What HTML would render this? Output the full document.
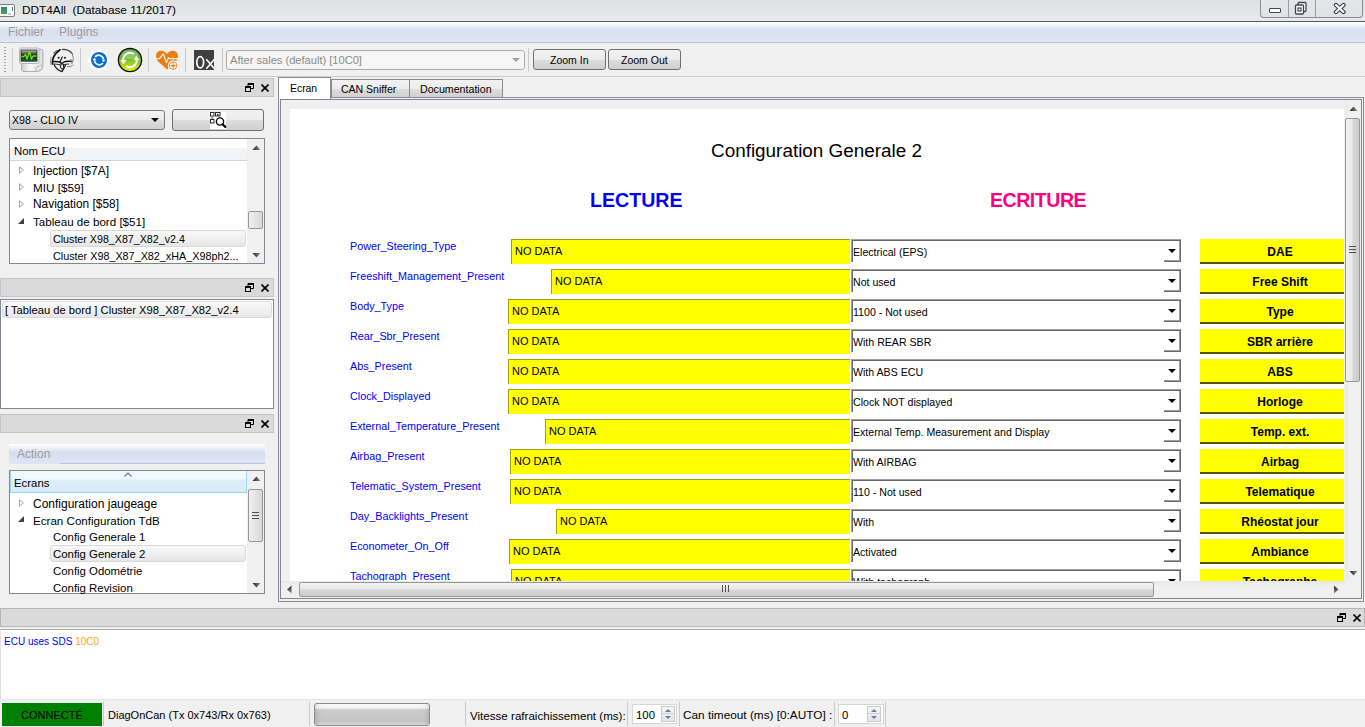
<!DOCTYPE html>
<html><head><meta charset="utf-8">
<style>
*{box-sizing:border-box;margin:0;padding:0}
html,body{width:1365px;height:727px;overflow:hidden;background:#f0f0f0;font-family:"Liberation Sans",sans-serif;font-size:11px;color:#000;position:relative}
.a{position:absolute}
.t{position:absolute;white-space:nowrap;line-height:1}
/* title bar */
#title{left:0;top:0;width:1365px;height:21px;background:linear-gradient(#dfe0e2,#e3e4e6 60%,#e9eaeb)}
#titleline{left:0;top:21px;width:1365px;height:1px;background:#5a5a5a}
#menubar{left:0;top:22px;width:1365px;height:21px;background:linear-gradient(#ffffff 0px,#eef1f8 4px,#d7dff0 8px,#dde4f3 18px,#e4e9f5 20px);border-bottom:1px solid #b9c3d9}
#winbtns{left:1260px;top:-1px;width:103px;height:19px;border:1px solid #8a8c90;border-top:none;border-radius:0 0 4px 4px;background:linear-gradient(#e4e6e9,#e0e2e5)}
.dock-title{position:absolute;left:0;width:274px;height:19px;background:#dadada;border:1px solid #c5c5c5}
.flt{position:absolute;width:9px;height:9px}
.btn{position:absolute;border:1px solid #707070;border-radius:3px;background:linear-gradient(#f2f2f2 0%,#ebebeb 50%,#dddddd 51%,#cfcfcf 100%)}
.tab{position:absolute;top:79px;height:19px;border:1px solid #898c95;border-bottom:none;background:linear-gradient(#f2f2f2,#ebebeb 50%,#dddddd 51%,#cfcfcf)}
.lbl{position:absolute;left:350px;color:#0000ff;font-size:10.8px;white-space:nowrap;line-height:1}
.nd{position:absolute;height:25px;background:#ffff00;border-left:1px solid #a3a300;border-top:1px solid #a3a300}
.nd span{position:absolute;left:3px;top:6px;font-size:11px;line-height:1;color:#000}
.cb{position:absolute;left:851px;width:330px;height:23px;background:#fff;border-left:1px solid #a0a0a0;border-top:1px solid #a0a0a0;box-shadow:inset 1px 1px 0 #696969}
.cb span{position:absolute;left:1px;top:7px;font-size:10.6px;line-height:1;color:#000;white-space:nowrap}
.cb i{position:absolute;right:0;top:1px;width:17px;height:21px;border-right:1px solid #696969;border-bottom:1px solid #696969;box-shadow:inset -1px -1px 0 #a0a0a0}
.cb i:before{content:"";position:absolute;left:4px;top:8px;border-left:4px solid transparent;border-right:4px solid transparent;border-top:4px solid #000}
.yb{position:absolute;left:1200px;width:160px;height:25px;background:#ffff00;border-bottom:2px solid #555500}
.yb span{position:absolute;left:0;right:0;top:7px;text-align:center;font-weight:bold;font-size:12px;line-height:1;color:#000}
.tr{position:absolute;font-size:11px;line-height:1;white-space:nowrap;color:#000}
.tri{position:absolute;width:0;height:0;border-top:4px solid transparent;border-bottom:4px solid transparent;border-left:5px solid #a6a6a6}
.tri:after{content:"";position:absolute;left:-4px;top:-2.5px;border-top:2.5px solid transparent;border-bottom:2.5px solid transparent;border-left:3px solid #fff}
.sep{position:absolute;width:1px;background:#cacaca}
</style></head><body>
<svg width="0" height="0" style="position:absolute"><defs><linearGradient id="ar1" x1="0" y1="0" x2="1" y2="0"><stop offset="0" stop-color="#202020"/><stop offset="1" stop-color="#909090"/></linearGradient><linearGradient id="ar2" x1="0" y1="0" x2="0" y2="1"><stop offset="0" stop-color="#202020"/><stop offset="1" stop-color="#909090"/></linearGradient></defs></svg>

<!-- Title bar -->
<div class="a" id="title"></div>
<div class="a" style="left:-3px;top:4px;width:18px;height:13px;border:1px solid #7a7e84;border-radius:2px;background:#fdfdfd"></div>
<div class="a" style="left:1px;top:7px;width:6px;height:7px;background:linear-gradient(#3a70b0,#3a9a5a 40%,#40a050)"></div>
<div class="a" style="left:8px;top:13px;width:3px;height:2px;background:#c8c8c8"></div>
<div class="a" style="left:12px;top:7px;width:1px;height:4px;background:linear-gradient(#3060c0,#40a040)"></div>
<div class="t" style="left:22px;top:5px;font-size:11.8px;color:#000">DDT4All&nbsp; (Database 11/2017)</div>
<div class="a" id="winbtns"></div>
<div class="a" style="left:1288px;top:0;width:1px;height:17px;background:#9a9ca0"></div>
<div class="a" style="left:1315px;top:0;width:1px;height:17px;background:#9a9ca0"></div>
<div class="a" style="left:1269px;top:8px;width:12px;height:5px;border:1.5px solid #3c4656;background:#fff;border-radius:1px"></div>
<svg class="a" style="left:1294px;top:1px" width="14" height="14" viewBox="0 0 14 14"><rect x="4" y="1.5" width="8" height="9" rx="1" fill="#fff" stroke="#3c4656" stroke-width="1.3"/><rect x="1.5" y="4" width="8" height="9" rx="1" fill="#fff" stroke="#3c4656" stroke-width="1.3"/><rect x="4" y="7" width="3" height="3" fill="none" stroke="#3c4656" stroke-width="1.2"/></svg>
<svg class="a" style="left:1333px;top:2px" width="14" height="13" viewBox="0 0 14 13"><path d="M3 3 L10.5 10 M10.5 3 L3 10" stroke="#3c4656" stroke-width="4.4" stroke-linecap="round"/><path d="M3 3 L10.5 10 M10.5 3 L3 10" stroke="#fff" stroke-width="2" stroke-linecap="round"/></svg>
<div class="a" id="titleline"></div>

<!-- Menu bar -->
<div class="a" id="menubar"></div>
<div class="t" style="left:8px;top:26px;font-size:12px;color:#a39a9a">Fichier</div>
<div class="t" style="left:59px;top:26px;font-size:12px;color:#a39a9a">Plugins</div>

<!-- Toolbar -->
<div class="a" style="left:0;top:76px;width:1365px;height:1px;background:#cbcbcb"></div>
<div class="a" style="left:4px;top:47px;width:2px;height:26px;background:repeating-linear-gradient(#a0a0a0 0 1px,transparent 1px 3px)"></div>
<div class="sep" style="left:12px;top:48px;height:24px"></div>
<div class="sep" style="left:80px;top:48px;height:24px"></div>
<div class="sep" style="left:148px;top:48px;height:24px"></div>
<div class="sep" style="left:185px;top:48px;height:24px"></div>
<div class="sep" style="left:222px;top:48px;height:24px"></div>
<div class="sep" style="left:528px;top:48px;height:24px"></div>


<!-- toolbar icons -->
<svg class="a" style="left:19px;top:47px" width="25" height="26" viewBox="0 0 25 26">
<defs><linearGradient id="pg" x1="0" y1="0" x2="1" y2="0"><stop offset="0" stop-color="#cfcfcf"/><stop offset="0.4" stop-color="#f7f7f7"/><stop offset="1" stop-color="#dcdcdc"/></linearGradient>
<linearGradient id="scr" x1="0" y1="0" x2="0" y2="1"><stop offset="0" stop-color="#c0c6c4"/><stop offset="0.45" stop-color="#0e2a1c"/><stop offset="1" stop-color="#0a6a3a"/></linearGradient></defs>
<path d="M3 2 H21 Q24 2 24 5 V18 Q24 24.5 17 24.5 H5 Q2.5 24.5 2.5 22 Z" fill="url(#pg)" stroke="#a8aeb4" stroke-width="1"/>
<path d="M17 24.5 Q15.5 20 19 19.5 Q22 19 24 18" fill="#e8e8e8" stroke="#a8aeb4" stroke-width="0.8"/>
<rect x="0.5" y="1" width="19.5" height="15.5" rx="1.5" fill="#f4f4f4" stroke="#b4b4b4" stroke-width="1"/>
<rect x="2" y="3" width="16" height="11.2" fill="url(#scr)" stroke="#2a2a2a" stroke-width="0.8"/>
<polyline points="2.4,9.5 5,9.5 6.5,7 8,12 10.5,4.5 12.5,12 14,9 17.6,9" fill="none" stroke="#7fe000" stroke-width="1.3" stroke-linejoin="round"/>
</svg>
<svg class="a" style="left:50px;top:48px" width="25" height="25" viewBox="0 0 25 25" fill="none" stroke-linecap="round" stroke-linejoin="round">
<path d="M2.5 16 Q1.5 8 10 1.8" stroke="#111" stroke-width="1.7"/>
<path d="M4 5 Q6 3 8 2.5" stroke="#555" stroke-width="1.2" stroke-dasharray="1.5 1"/>
<path d="M12.5 1.5 Q19 1 22.5 6" stroke="#444" stroke-width="1.3" stroke-dasharray="2 0.8"/>
<path d="M22.5 7.5 Q24 11 22.5 14" stroke="#777" stroke-width="1" stroke-dasharray="1.5 1"/>
<path d="M1 9 Q0 13 1 17" stroke="#888" stroke-width="0.9" stroke-dasharray="1.2 1"/>
<circle cx="8.6" cy="9.7" r="1" fill="#111" stroke="none"/><circle cx="15" cy="9.7" r="1" fill="#111" stroke="none"/>
<path d="M12.3 9 Q11 11.5 10 14" stroke="#111" stroke-width="1.2"/>
<path d="M3.5 13.6 Q8 13.2 10 14.2 Q12 16.5 14 13.8 Q17 13 21 13.4" stroke="#111" stroke-width="1.3"/>
<path d="M4 16.5 Q6.5 22 12 23.6 Q14.5 20 15.5 17" stroke="#111" stroke-width="1.2"/>
<path d="M10 16.8 Q10.5 21.5 12.3 21.3 Q13.8 20.5 13.6 16.8" stroke="#111" stroke-width="1"/>
<path d="M4.5 16 Q10 17.8 19 16" stroke="#222" stroke-width="0.9"/>
<path d="M17.5 18.5 Q20.5 19 23 17" stroke="#666" stroke-width="0.9" stroke-dasharray="1.5 0.8"/>
<path d="M21 11.5 Q23 13 22 15.5" stroke="#555" stroke-width="0.9"/>
</svg>
<svg class="a" style="left:87px;top:48px" width="24" height="24" viewBox="0 0 24 24">
<g fill="#fff"><circle cx="12" cy="12" r="9.5"/><rect x="10" y="0.8" width="4" height="4" rx="1"/><rect x="10" y="19.2" width="4" height="4" rx="1"/><rect x="0.8" y="10" width="4" height="4" rx="1"/><rect x="19.2" y="10" width="4" height="4" rx="1"/><g transform="rotate(45 12 12)"><rect x="10" y="0.8" width="4" height="4" rx="1"/><rect x="10" y="19.2" width="4" height="4" rx="1"/><rect x="0.8" y="10" width="4" height="4" rx="1"/><rect x="19.2" y="10" width="4" height="4" rx="1"/></g></g>
<circle cx="12" cy="12" r="8" fill="#0b6fd2"/>
<path d="M7.5 12.5 A4.8 4.8 0 0 0 16 15" fill="none" stroke="#fff" stroke-width="1.6"/>
<path d="M16.5 11.5 A4.8 4.8 0 0 0 8 9" fill="none" stroke="#fff" stroke-width="1.6"/>
<path d="M5.6 12.3 L9.4 12.3 L7.5 9.8Z" fill="#fff"/><path d="M14.6 11.7 L18.4 11.7 L16.5 14.2Z" fill="#fff"/>
</svg>
<svg class="a" style="left:117px;top:47px" width="26" height="26" viewBox="0 0 26 26">
<defs><linearGradient id="gg" x1="0" y1="0" x2="0" y2="1"><stop offset="0" stop-color="#3c9a3a"/><stop offset="0.5" stop-color="#7cc22c"/><stop offset="1" stop-color="#e8f000"/></linearGradient></defs>
<circle cx="13" cy="13" r="11.6" fill="url(#gg)" stroke="#0a0a0a" stroke-width="1.3"/>
<ellipse cx="13" cy="7.5" rx="8" ry="4.5" fill="#fff" opacity="0.25"/>
<path d="M6.5 14 A6.8 6.8 0 0 1 17 7" fill="none" stroke="#fff" stroke-width="2"/>
<path d="M19.5 12 A6.8 6.8 0 0 1 9 19" fill="none" stroke="#fff" stroke-width="2"/>
<path d="M3.5 13 L9.5 13 L6.5 17.5Z" fill="#fff"/><path d="M16.5 13 L22.5 13 L19.5 8.5Z" fill="#fff"/>
</svg>
<svg class="a" style="left:155px;top:49px" width="24" height="22" viewBox="0 0 24 22">
<path d="M12 5 C10 0.5 1 0 1 7 C1 10.5 3 12.5 6 15 L12 20.5 L18 15 C21 12.5 23 10.5 23 7 C23 0 14 0.5 12 5Z" fill="#f07c12"/>
<polyline points="0.5,9.8 4.5,9.6 8.3,4.8 11.5,13.6 13.5,8.5 14.6,9.6 23.5,9.6" fill="none" stroke="#fff" stroke-width="1.1" stroke-linejoin="round"/>
<circle cx="18.2" cy="16.6" r="5.3" fill="#fff"/>
<circle cx="18.2" cy="16.6" r="4.2" fill="#f07c12"/>
<circle cx="18.2" cy="16.6" r="3.2" fill="#fff"/>
<circle cx="18.2" cy="16.6" r="2.5" fill="#f07c12" opacity="0"/>
<path d="M18.2 14.2V19M15.8 16.6H20.6" stroke="#f07c12" stroke-width="1.2"/>
</svg>
<svg class="a" style="left:194px;top:50px" width="20" height="20" viewBox="0 0 20 20"><rect width="20" height="20" fill="#404040"/><ellipse cx="6.2" cy="12.3" rx="3.4" ry="5.6" fill="none" stroke="#fff" stroke-width="1.7"/><path d="M12.3 9.2L20.5 18.8M20.5 9.2L12.3 18.8" stroke="#fff" stroke-width="1.6"/></svg>

<!-- Combo after sales -->
<div class="a" style="left:226px;top:50px;width:299px;height:20px;border:1px solid #acacac;border-radius:3px;background:#f6f6f6"></div>
<div class="t" style="left:230px;top:55px;font-size:11.1px;color:#8a8a8a">After sales (default) [10C0]</div>
<div class="a" style="left:512px;top:58px;border-left:4px solid transparent;border-right:4px solid transparent;border-top:4px solid #a0a0a0"></div>
<div class="btn" style="left:533px;top:49px;width:73px;height:21px"></div>
<div class="t" style="left:550px;top:55px;font-size:10.5px">Zoom In</div>
<div class="btn" style="left:608px;top:49px;width:73px;height:21px"></div>
<div class="t" style="left:621px;top:55px;font-size:10.5px">Zoom Out</div>

<!-- LEFT DOCK 1 -->
<div class="dock-title" style="top:78px"></div>
<svg class="a" style="left:245px;top:83px" width="9" height="9" viewBox="0 0 9 9"><path d="M3 0.5H8.5V5.5H6M3 0.5V3" fill="none" stroke="#000" stroke-width="1"/><rect x="3" y="0" width="6" height="2" fill="#000"/><rect x="0.5" y="3.5" width="5" height="5" fill="none" stroke="#000" stroke-width="1"/><rect x="0" y="3" width="6" height="2" fill="#000"/></svg>
<svg class="a" style="left:261px;top:84px" width="8" height="8" viewBox="0 0 8 8"><path d="M0.5 0.5L7.5 7.5M7.5 0.5L0.5 7.5" stroke="#000" stroke-width="1.6"/></svg>

<div class="btn" style="left:9px;top:110px;width:156px;height:20px;border-color:#7a7a7a"></div>
<div class="t" style="left:12px;top:115px;font-size:10.6px">X98 - CLIO IV</div>
<div class="a" style="left:151px;top:118px;border-left:4px solid transparent;border-right:4px solid transparent;border-top:4px solid #000"></div>
<div class="btn" style="left:172px;top:109px;width:92px;height:22px"></div>
<svg class="a" style="left:209px;top:111px" width="18" height="18" viewBox="0 0 18 18"><rect x="1" y="1" width="16" height="17" fill="#fff"/><g fill="none" stroke="#2a2a2a" stroke-width="1"><rect x="1.5" y="1.5" width="3.5" height="3.5"/><rect x="6.5" y="1.5" width="4.5" height="3.5"/><rect x="1.5" y="8.5" width="3.5" height="3.5"/></g><rect x="8" y="3" width="1.5" height="1.5" fill="#111"/><rect x="2" y="6.5" width="2.5" height="1" fill="#444"/><circle cx="11" cy="10.5" r="3.6" fill="#fff" stroke="#000" stroke-width="1.4"/><path d="M13.6 13.2L16.3 15.9" stroke="#000" stroke-width="2.2" stroke-linecap="round"/></svg>

<!-- Tree ECU -->
<div class="a" style="left:9px;top:138px;width:256px;height:126px;border:1px solid #828790;background:#fff"></div>
<div class="a" style="left:10px;top:139px;width:237px;height:22px;background:linear-gradient(#fff 0,#fff 9px,#f2f3f5 9px);border-bottom:1px solid #d5d5d5"></div>
<div class="tr" style="font-size:11.4px;left:14px;top:146px">Nom ECU</div>
<div class="a" style="left:247px;top:139px;width:17px;height:124px;background:#f0f0f0"></div>
<svg class="a" style="left:252px;top:145px" width="9" height="5" viewBox="0 0 9 5"><path d="M0.5 5L4.5 0.5L8.5 5Z" fill="url(#ar1)"/></svg>
<svg class="a" style="left:252px;top:253px" width="9" height="5" viewBox="0 0 9 5"><path d="M0.5 0L4.5 4.5L8.5 0Z" fill="url(#ar1)"/></svg>
<div class="a" style="left:248px;top:211px;width:15px;height:18px;border:1px solid #979797;border-radius:2px;background:linear-gradient(90deg,#f0f0f0,#d8d8d8)"></div>
<div class="tri" style="left:19px;top:166px"></div>
<div class="tri" style="left:19px;top:183px"></div>
<div class="tri" style="left:19px;top:200px"></div>
<div class="a" style="left:18px;top:218px;width:0;height:0;border-bottom:6px solid #404040;border-left:6px solid transparent"></div>
<div class="tr" style="font-size:12px;left:33px;top:165px">Injection [$7A]</div>
<div class="tr" style="font-size:11.7px;left:33px;top:182px">MIU [$59]</div>
<div class="tr" style="font-size:11.9px;left:33px;top:199px">Navigation [$58]</div>
<div class="tr" style="font-size:11.6px;left:33px;top:216px">Tableau de bord [$51]</div>
<div class="a" style="left:50px;top:230px;width:196px;height:17px;border:1px solid #d9d9d9;border-radius:3px;background:linear-gradient(#fafafa,#e6e6e6)"></div>
<div class="tr" style="font-size:10.7px;left:53px;top:234px">Cluster X98_X87_X82_v2.4</div>
<div class="tr" style="font-size:10.8px;left:53px;top:251px">Cluster X98_X87_X82_xHA_X98ph2...</div>
<div class="a" style="left:10px;top:263px;width:254px;height:0"></div>

<!-- LEFT DOCK 2 -->
<div class="dock-title" style="top:278px"></div>
<svg class="a" style="left:245px;top:283px" width="9" height="9" viewBox="0 0 9 9"><path d="M3 0.5H8.5V5.5H6M3 0.5V3" fill="none" stroke="#000" stroke-width="1"/><rect x="3" y="0" width="6" height="2" fill="#000"/><rect x="0.5" y="3.5" width="5" height="5" fill="none" stroke="#000" stroke-width="1"/><rect x="0" y="3" width="6" height="2" fill="#000"/></svg>
<svg class="a" style="left:261px;top:284px" width="8" height="8" viewBox="0 0 8 8"><path d="M0.5 0.5L7.5 7.5M7.5 0.5L0.5 7.5" stroke="#000" stroke-width="1.6"/></svg>
<div class="a" style="left:0;top:299px;width:274px;height:110px;border:1px solid #828790;background:#fff"></div>
<div class="a" style="left:2px;top:301px;width:270px;height:17px;border:1px solid #dadada;border-radius:3px;background:linear-gradient(#fafafa,#e8e8e8)"></div>
<div class="tr" style="font-size:11.2px;left:5px;top:305px">[ Tableau de bord ] Cluster X98_X87_X82_v2.4</div>

<!-- LEFT DOCK 3 -->
<div class="dock-title" style="top:414px"></div>
<svg class="a" style="left:245px;top:419px" width="9" height="9" viewBox="0 0 9 9"><path d="M3 0.5H8.5V5.5H6M3 0.5V3" fill="none" stroke="#000" stroke-width="1"/><rect x="3" y="0" width="6" height="2" fill="#000"/><rect x="0.5" y="3.5" width="5" height="5" fill="none" stroke="#000" stroke-width="1"/><rect x="0" y="3" width="6" height="2" fill="#000"/></svg>
<svg class="a" style="left:261px;top:420px" width="8" height="8" viewBox="0 0 8 8"><path d="M0.5 0.5L7.5 7.5M7.5 0.5L0.5 7.5" stroke="#000" stroke-width="1.6"/></svg>
<div class="a" style="left:9px;top:444px;width:256px;height:20px;background:linear-gradient(#ffffff 0,#eef1f8 4px,#d7dff0 8px,#dde4f3 18px)"></div>
<div class="a" style="left:60px;top:463px;width:205px;height:1px;background:#b9c3d9"></div>
<div class="t" style="left:17px;top:448px;font-size:12px;color:#a39a9a">Action</div>
<div class="a" style="left:9px;top:470px;width:256px;height:124px;border:1px solid #828790;background:#fff"></div>
<div class="a" style="left:10px;top:471px;width:237px;height:22px;background:linear-gradient(#f2f9fd 0,#f2f9fd 8px,#ddeef8 9px,#d8ebf7);border:1px solid #96d9f9;border-top:none"></div>
<svg class="a" style="left:124px;top:472px" width="8" height="5" viewBox="0 0 8 5"><path d="M0.5 4.5L4 1L7.5 4.5" fill="none" stroke="#5a7a98" stroke-width="1.2"/></svg>
<div class="tr" style="font-size:11.4px;left:14px;top:478px">Ecrans</div>
<div class="a" style="left:247px;top:471px;width:17px;height:122px;background:#f0f0f0"></div>
<svg class="a" style="left:252px;top:476px" width="9" height="5" viewBox="0 0 9 5"><path d="M0.5 5L4.5 0.5L8.5 5Z" fill="url(#ar1)"/></svg>
<svg class="a" style="left:252px;top:583px" width="9" height="5" viewBox="0 0 9 5"><path d="M0.5 0L4.5 4.5L8.5 0Z" fill="url(#ar1)"/></svg>
<div class="a" style="left:248px;top:489px;width:15px;height:53px;border:1px solid #979797;border-radius:2px;background:linear-gradient(90deg,#f0f0f0,#d8d8d8)"></div>
<div class="a" style="left:252px;top:512px;width:7px;height:7px;background:repeating-linear-gradient(#505050 0 1px,transparent 1px 3px)"></div>
<div class="tri" style="left:19px;top:499px"></div>
<div class="a" style="left:18px;top:516px;width:0;height:0;border-bottom:6px solid #404040;border-left:6px solid transparent"></div>
<div class="tr" style="font-size:12px;left:33px;top:498px">Configuration jaugeage</div>
<div class="tr" style="font-size:11.6px;left:33px;top:515px">Ecran Configuration TdB</div>
<div class="tr" style="font-size:11.4px;left:53px;top:532px">Config Generale 1</div>
<div class="a" style="left:50px;top:545px;width:196px;height:17px;border:1px solid #d9d9d9;border-radius:3px;background:linear-gradient(#fafafa,#e6e6e6)"></div>
<div class="tr" style="font-size:11.4px;left:53px;top:549px">Config Generale 2</div>
<div class="tr" style="font-size:11.4px;left:53px;top:566px">Config Odométrie</div>
<div class="tr" style="font-size:11.4px;left:53px;top:583px">Config Revision</div>

<!-- TABS -->
<div class="tab" style="left:331px;width:79px"></div>
<div class="t" style="left:341px;top:84px;font-size:10.5px">CAN Sniffer</div>
<div class="tab" style="left:409px;width:94px"></div>
<div class="t" style="left:420px;top:84px;font-size:10.65px">Documentation</div>
<div class="a" style="left:278px;top:97px;width:1086px;height:505px;border:1px solid #898c95;background:#f0f0f0"></div>
<div class="a" style="left:278px;top:77px;width:53px;height:22px;border:1px solid #898c95;border-bottom:none;background:#fff"></div>
<div class="t" style="left:290px;top:84px;font-size:10.4px">Ecran</div>
<div class="a" style="left:280px;top:99px;width:1082px;height:500px;border:1px solid #828790;background:#f0f0f0"></div>

<!-- content -->
<div class="a" style="left:290px;top:108px;width:1054px;height:473px;background:#fff;overflow:hidden" id="content">
<!--C-->
<div class="t" style="left:421px;top:34px;font-size:18.9px">Configuration Generale 2</div>
<div class="t" style="left:300px;top:83px;font-size:19.6px;font-weight:bold;color:#0000ff">LECTURE</div>
<div class="t" style="left:700px;top:83px;font-size:19.6px;font-weight:bold;color:#ff0080;letter-spacing:-0.5px">ECRITURE</div>
<div class="lbl" style="left:60px;top:133px">Power_Steering_Type</div>
<div class="nd" style="left:221px;top:131px;width:339px"><span>NO DATA</span></div>
<div class="cb" style="left:561px;top:131px"><span>Electrical (EPS)</span><i></i></div>
<div class="yb" style="left:910px;top:131px"><span>DAE</span></div>
<div class="lbl" style="left:60px;top:163px">Freeshift_Management_Present</div>
<div class="nd" style="left:261px;top:161px;width:299px"><span>NO DATA</span></div>
<div class="cb" style="left:561px;top:161px"><span>Not used</span><i></i></div>
<div class="yb" style="left:910px;top:161px"><span>Free Shift</span></div>
<div class="lbl" style="left:60px;top:193px">Body_Type</div>
<div class="nd" style="left:218px;top:191px;width:342px"><span>NO DATA</span></div>
<div class="cb" style="left:561px;top:191px"><span>1100 - Not used</span><i></i></div>
<div class="yb" style="left:910px;top:191px"><span>Type</span></div>
<div class="lbl" style="left:60px;top:223px">Rear_Sbr_Present</div>
<div class="nd" style="left:218px;top:221px;width:342px"><span>NO DATA</span></div>
<div class="cb" style="left:561px;top:221px"><span>With REAR SBR</span><i></i></div>
<div class="yb" style="left:910px;top:221px"><span>SBR arrière</span></div>
<div class="lbl" style="left:60px;top:253px">Abs_Present</div>
<div class="nd" style="left:218px;top:251px;width:342px"><span>NO DATA</span></div>
<div class="cb" style="left:561px;top:251px"><span>With ABS ECU</span><i></i></div>
<div class="yb" style="left:910px;top:251px"><span>ABS</span></div>
<div class="lbl" style="left:60px;top:283px">Clock_Displayed</div>
<div class="nd" style="left:218px;top:281px;width:342px"><span>NO DATA</span></div>
<div class="cb" style="left:561px;top:281px"><span>Clock NOT displayed</span><i></i></div>
<div class="yb" style="left:910px;top:281px"><span>Horloge</span></div>
<div class="lbl" style="left:60px;top:313px">External_Temperature_Present</div>
<div class="nd" style="left:255px;top:311px;width:305px"><span>NO DATA</span></div>
<div class="cb" style="left:561px;top:311px"><span>External Temp. Measurement and Display</span><i></i></div>
<div class="yb" style="left:910px;top:311px"><span>Temp. ext.</span></div>
<div class="lbl" style="left:60px;top:343px">Airbag_Present</div>
<div class="nd" style="left:220px;top:341px;width:340px"><span>NO DATA</span></div>
<div class="cb" style="left:561px;top:341px"><span>With AIRBAG</span><i></i></div>
<div class="yb" style="left:910px;top:341px"><span>Airbag</span></div>
<div class="lbl" style="left:60px;top:373px">Telematic_System_Present</div>
<div class="nd" style="left:220px;top:371px;width:340px"><span>NO DATA</span></div>
<div class="cb" style="left:561px;top:371px"><span>110 - Not used</span><i></i></div>
<div class="yb" style="left:910px;top:371px"><span>Telematique</span></div>
<div class="lbl" style="left:60px;top:403px">Day_Backlights_Present</div>
<div class="nd" style="left:266px;top:401px;width:294px"><span>NO DATA</span></div>
<div class="cb" style="left:561px;top:401px"><span>With</span><i></i></div>
<div class="yb" style="left:910px;top:401px"><span>Rhéostat jour</span></div>
<div class="lbl" style="left:60px;top:433px">Econometer_On_Off</div>
<div class="nd" style="left:219px;top:431px;width:341px"><span>NO DATA</span></div>
<div class="cb" style="left:561px;top:431px"><span>Activated</span><i></i></div>
<div class="yb" style="left:910px;top:431px"><span>Ambiance</span></div>
<div class="lbl" style="left:60px;top:463px">Tachograph_Present</div>
<div class="nd" style="left:221px;top:461px;width:339px"><span>NO DATA</span></div>
<div class="cb" style="left:561px;top:461px"><span>With tachograph</span><i></i></div>
<div class="yb" style="left:910px;top:461px"><span>Tachographe</span></div>
<!--/C-->
</div>
<!-- content scrollbars -->
<div class="a" style="left:290px;top:108px;width:1055px;height:1px;background:#f0f0f0"></div>
<div class="a" style="left:1345px;top:100px;width:16px;height:481px;background:linear-gradient(90deg,#e8e8e8,#f0f0f0 30%,#f0f0f0)"></div>
<svg class="a" style="left:1349px;top:106px" width="9" height="5" viewBox="0 0 9 5"><defs><linearGradient id="ar1" x1="0" y1="0" x2="1" y2="0"><stop offset="0" stop-color="#202020"/><stop offset="1" stop-color="#909090"/></linearGradient></defs><path d="M0.5 5L4.5 0.5L8.5 5Z" fill="url(#ar1)"/></svg>
<div class="a" style="left:1345px;top:118px;width:15px;height:264px;border:1px solid #979797;border-radius:2px;background:linear-gradient(90deg,#f3f3f3,#e9e9e9 45%,#d6d6d6 55%,#cdcdcd)"></div>
<div class="a" style="left:1349px;top:246px;width:7px;height:7px;background:repeating-linear-gradient(#505050 0 1px,transparent 1px 3px)"></div>
<svg class="a" style="left:1349px;top:571px" width="9" height="5" viewBox="0 0 9 5"><path d="M0.5 0L4.5 4.5L8.5 0Z" fill="url(#ar1)"/></svg>
<div class="a" style="left:290px;top:100px;width:1055px;height:8px;background:#f0f0f0"></div>
<div class="a" style="left:281px;top:581px;width:1064px;height:17px;background:linear-gradient(#e8e8e8,#f0f0f0 30%,#f0f0f0)"></div>
<svg class="a" style="left:287px;top:585px" width="5" height="9" viewBox="0 0 5 9"><defs><linearGradient id="ar2" x1="0" y1="0" x2="0" y2="1"><stop offset="0" stop-color="#202020"/><stop offset="1" stop-color="#909090"/></linearGradient></defs><path d="M4.5 0.5L0 4.5L4.5 8.5Z" fill="url(#ar2)"/></svg>
<svg class="a" style="left:1334px;top:585px" width="5" height="9" viewBox="0 0 5 9"><path d="M0 0.5L4.5 4.5L0 8.5Z" fill="url(#ar2)"/></svg>
<div class="a" style="left:299px;top:582px;width:855px;height:15px;border:1px solid #979797;border-radius:2px;background:linear-gradient(#f3f3f3,#e9e9e9 45%,#d6d6d6 55%,#cdcdcd)"></div>
<div class="a" style="left:722px;top:585px;width:8px;height:7px;background:repeating-linear-gradient(90deg,#505050 0 1px,transparent 1px 3px)"></div>
<div class="a" style="left:1345px;top:581px;width:16px;height:17px;background:#f0f0f0"></div>

<!-- bottom dock -->
<div class="a" style="left:0;top:608px;width:1365px;height:19px;background:#dadada;border:1px solid #b6b6b6"></div>
<svg class="a" style="left:1337px;top:613px" width="9" height="9" viewBox="0 0 9 9"><path d="M3 0.5H8.5V5.5H6M3 0.5V3" fill="none" stroke="#000" stroke-width="1"/><rect x="3" y="0" width="6" height="2" fill="#000"/><rect x="0.5" y="3.5" width="5" height="5" fill="none" stroke="#000" stroke-width="1"/><rect x="0" y="3" width="6" height="2" fill="#000"/></svg>
<svg class="a" style="left:1353px;top:614px" width="8" height="8" viewBox="0 0 8 8"><path d="M0.5 0.5L7.5 7.5M7.5 0.5L0.5 7.5" stroke="#000" stroke-width="1.6"/></svg>
<div class="a" style="left:0;top:629px;width:1365px;height:70px;background:#fff;border-left:1px solid #dfe3e8;border-top:1px solid #a8a8a8"></div>
<div class="t" style="left:4px;top:637px;font-size:10px"><span style="color:#0000ff">ECU uses SDS</span> <span style="color:#ffa500">10C0</span></div>

<!-- status bar -->
<div class="a" style="left:0;top:699px;width:1365px;height:1px;background:#e3e8ef"></div>
<div class="a" style="left:2px;top:703px;width:100px;height:23px;background:#008000"></div>
<div class="t" style="left:21px;top:710px;font-size:11px">CONNECTÉ</div>
<div class="sep" style="left:103px;top:702px;height:24px"></div>
<div class="t" style="left:108px;top:710px;font-size:11px">DiagOnCan (Tx 0x743/Rx 0x763)</div>
<div class="sep" style="left:309px;top:702px;height:24px"></div>
<div class="a" style="left:314px;top:703px;width:116px;height:23px;border:1px solid #8c8c8c;border-radius:3px;background:linear-gradient(#fbfbfb 0,#f2f2f2 4px,#cbcbcb 6px,#c6c6c6 85%,#d6d6d6);box-shadow:inset 7px 0 5px -5px rgba(0,0,0,.12),inset -7px 0 5px -5px rgba(0,0,0,.12)"></div>
<div class="sep" style="left:465px;top:702px;height:24px"></div>
<div class="t" style="left:470px;top:710px;font-size:11.6px">Vitesse rafraichissement (ms):</div>
<div class="sep" style="left:627px;top:702px;height:24px"></div>
<div class="a" style="left:632px;top:704px;width:45px;height:20px;border:1px solid #d6d6d6;background:#fff"></div>
<div class="t" style="left:636px;top:710px;font-size:11.4px">100</div>
<div class="a" style="left:661px;top:706px;width:14px;height:16px;border:1px solid #c9c9c9;background:linear-gradient(#f5f5f5,#e5e5e5)"></div>
<div class="a" style="left:665px;top:709px;border-left:3px solid transparent;border-right:3px solid transparent;border-bottom:3px solid #6a7ca6"></div>
<div class="a" style="left:665px;top:716px;border-left:3px solid transparent;border-right:3px solid transparent;border-top:3px solid #6a7ca6"></div><div class="a" style="left:662px;top:713px;width:12px;height:1px;background:#d0d0d0"></div>
<div class="sep" style="left:679px;top:702px;height:24px"></div>
<div class="t" style="left:683px;top:710px;font-size:11.8px">Can timeout (ms) [0:AUTO] :</div>
<div class="sep" style="left:834px;top:702px;height:24px"></div>
<div class="a" style="left:838px;top:704px;width:46px;height:20px;border:1px solid #d6d6d6;background:#fff"></div>
<div class="t" style="left:842px;top:710px;font-size:11.4px">0</div>
<div class="a" style="left:867px;top:706px;width:14px;height:16px;border:1px solid #c9c9c9;background:linear-gradient(#f5f5f5,#e5e5e5)"></div>
<div class="a" style="left:871px;top:709px;border-left:3px solid transparent;border-right:3px solid transparent;border-bottom:3px solid #6a7ca6"></div>
<div class="a" style="left:871px;top:716px;border-left:3px solid transparent;border-right:3px solid transparent;border-top:3px solid #6a7ca6"></div><div class="a" style="left:868px;top:713px;width:12px;height:1px;background:#d0d0d0"></div>
<div class="sep" style="left:885px;top:702px;height:24px"></div>

</body></html>
